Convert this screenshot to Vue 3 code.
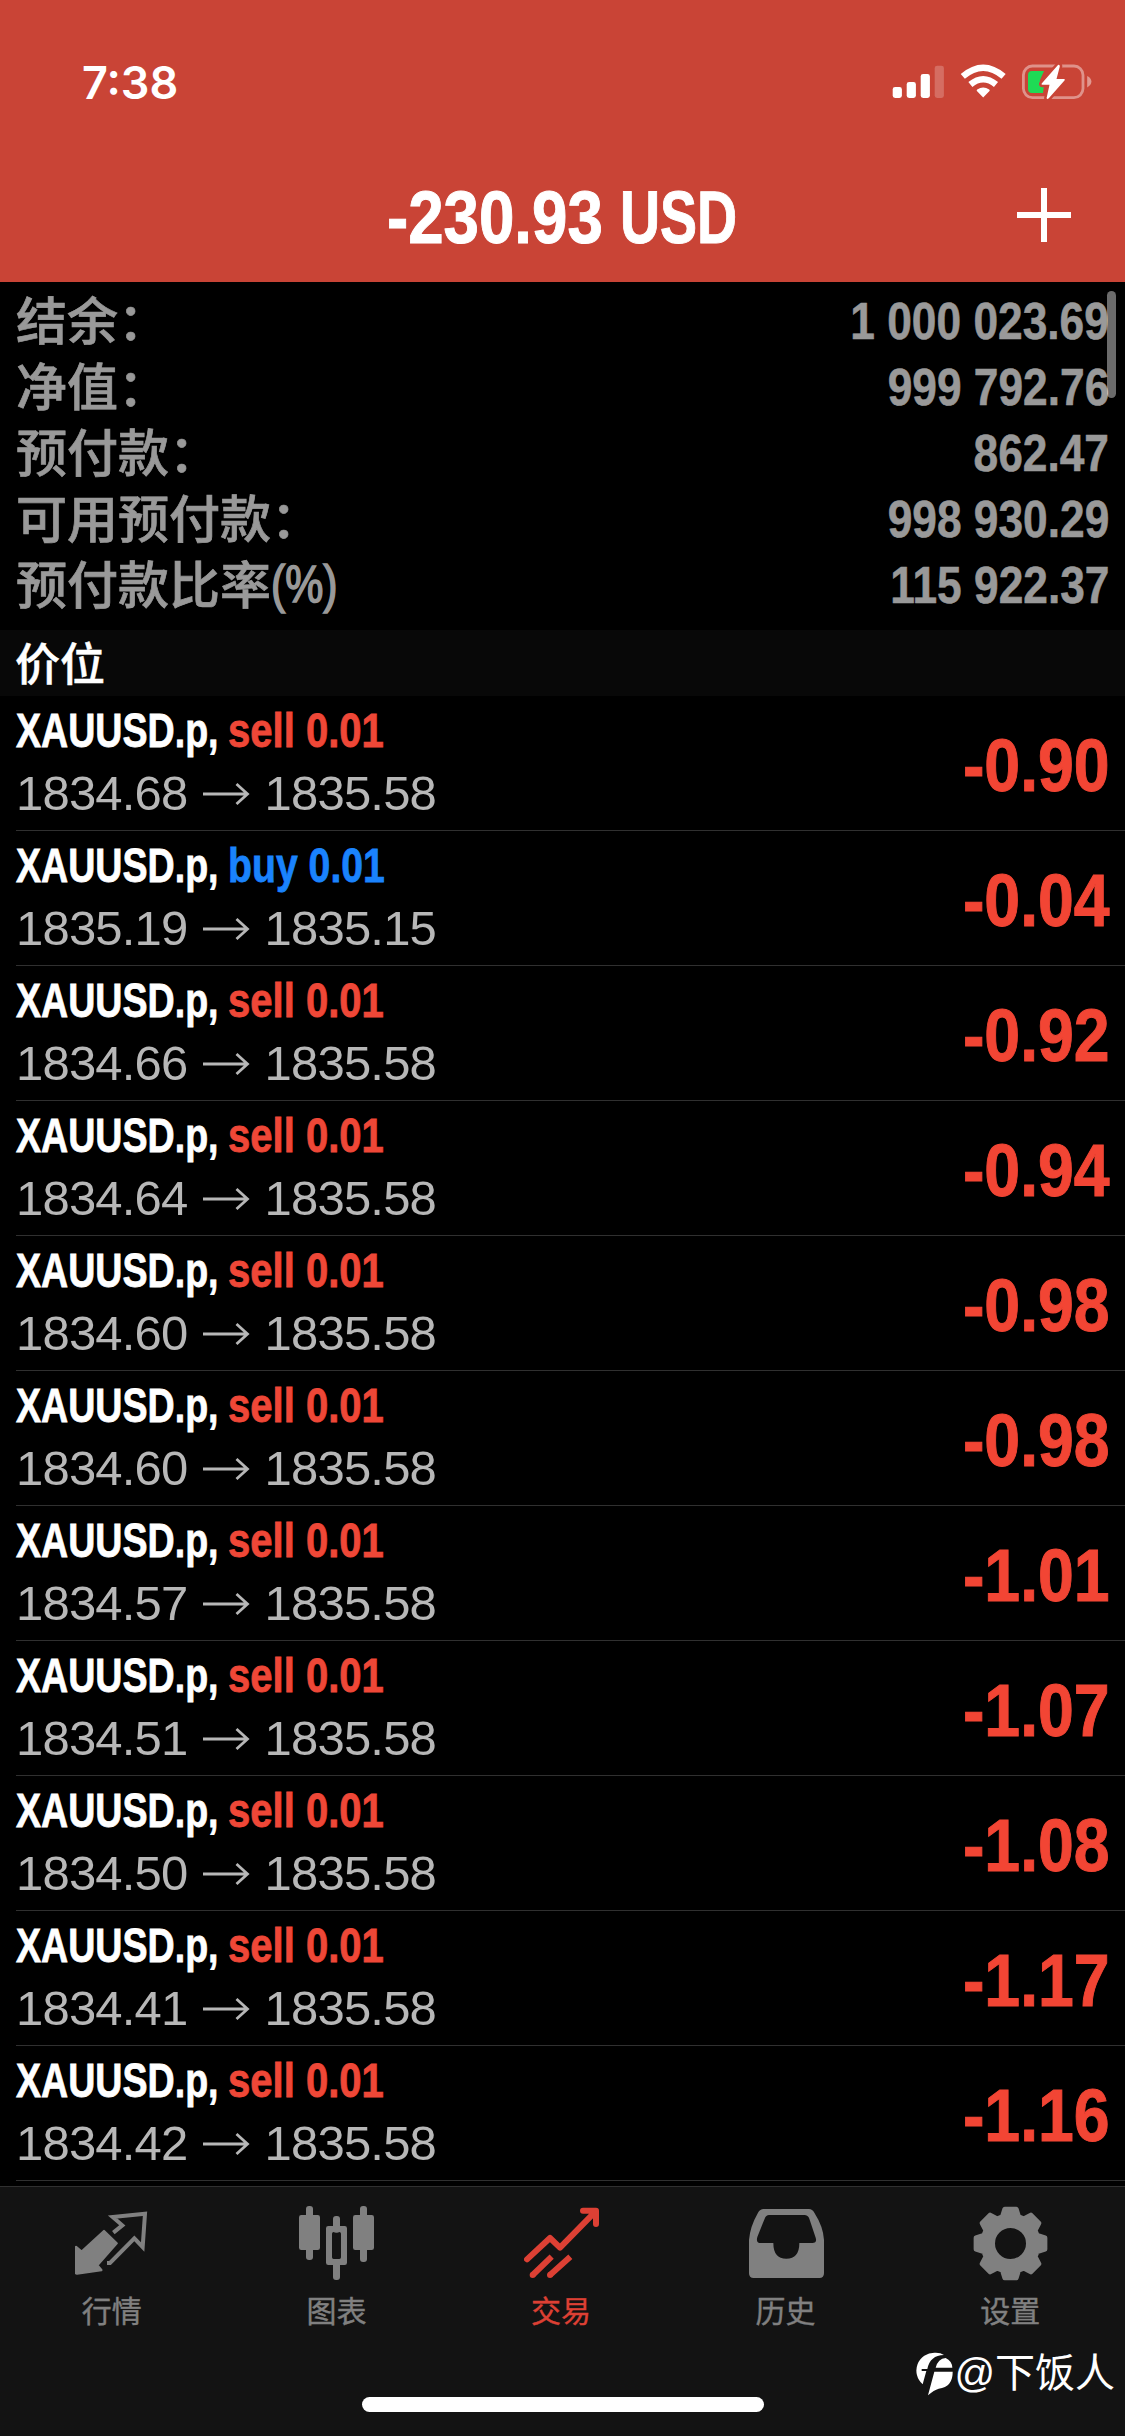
<script setup>
const summary = [
  { label: '结余：', value: '1 000 023.69' },
  { label: '净值：', value: '999 792.76' },
  { label: '预付款：', value: '862.47' },
  { label: '可用预付款：', value: '998 930.29' },
  { label: '预付款比率', unit: '(%)', value: '115 922.37' },
]

const positions = [
  ['sell', '1834.68', '1835.58', '-0.90'],
  ['buy', '1835.19', '1835.15', '-0.04'],
  ['sell', '1834.66', '1835.58', '-0.92'],
  ['sell', '1834.64', '1835.58', '-0.94'],
  ['sell', '1834.60', '1835.58', '-0.98'],
  ['sell', '1834.60', '1835.58', '-0.98'],
  ['sell', '1834.57', '1835.58', '-1.01'],
  ['sell', '1834.51', '1835.58', '-1.07'],
  ['sell', '1834.50', '1835.58', '-1.08'],
  ['sell', '1834.41', '1835.58', '-1.17'],
  ['sell', '1834.42', '1835.58', '-1.16'],
].map(([side, open, current, profit]) => ({ side, open, current, profit }))

const tabs = [
  { id: 'quotes', label: '行情' },
  { id: 'chart', label: '图表' },
  { id: 'trade', label: '交易' },
  { id: 'history', label: '历史' },
  { id: 'settings', label: '设置' },
]

// Eight-toothed gear outline around (112.5, 112.5)
const point = (deg, r) => {
  const t = (deg * Math.PI) / 180
  return `${(112.5 + r * Math.cos(t)).toFixed(1)} ${(112.5 + r * Math.sin(t)).toFixed(1)}`
}
const teeth = Array.from({ length: 8 }, (_, i) =>
  [[-17, 84], [-9.5, 105], [9.5, 105], [17, 84]].map(([a, r]) => point(i * 45 + a, r)).join('L')
).join('L')
const gear = `M${teeth}ZM66 112.5a46.5 46.5 0 1 0 93 0a46.5 46.5 0 1 0 -93 0Z`
const gearOutline = `M${teeth}Z`
</script>

<template>
  <div class="screen">
    <header class="header">
      <div class="status">
        <span class="time">7:38</span>
        <svg class="status-icons" width="200" height="36" viewBox="0 0 200 36">
          <g fill="#fff">
            <rect x="0.7" y="23" width="9.2" height="11" rx="2.4" />
            <rect x="14.7" y="18" width="9.2" height="16" rx="2.4" />
            <rect x="28.7" y="10" width="9.2" height="24" rx="2.4" />
            <rect x="42.7" y="1.7" width="9.2" height="32.3" rx="2.4" opacity=".22" />
            <path d="M91.2 33.6 L84.9 27 Q84.3 26.2 85.2 25.6 Q91.2 21.6 97.2 25.6 Q98.1 26.2 97.5 27 Z" />
          </g>
          <g fill="none" stroke="#fff" stroke-width="6.4">
            <path d="M70.8 12.4 Q91.2 -4.9 111.6 12.4" />
            <path d="M78.4 20.5 Q91.2 10 104 20.5" />
          </g>
          <rect x="131.4" y="2" width="59.6" height="31.6" rx="9" fill="none" stroke="#fff" stroke-opacity=".42" stroke-width="2.8" />
          <path d="M195.2 12 Q199.4 14 199.4 17.6 Q199.4 21.2 195.2 23.4 Z" fill="#fff" opacity=".45" />
          <path d="M140 7 H152 L148 16 Q147 20 152 21 L151 29 H140 Q136 29 136 25 V11 Q136 7 140 7 Z" fill="#1fdb55" />
          <path d="M166 1 L149.7 19.5 Q149 20.8 150.5 20.8 H157.5 L154.6 34 Q155 36 157 34 L172.7 16.2 Q173.3 15 171.8 15 H164.5 L167.8 2.5 Q167.8 0 166 1 Z" fill="#fff" stroke="#c94436" stroke-width="5" paint-order="stroke" />
        </svg>
      </div>
      <div class="titlebar">
        <h1 class="title"><span class="title-num">-230.93</span><span class="title-cur">USD</span></h1>
        <svg class="plus" width="54" height="54" viewBox="0 0 54 54">
          <path d="M27 0V54M0 27H54" stroke="#fff" stroke-width="6" />
        </svg>
      </div>
    </header>

    <section class="summary">
      <div v-for="row in summary" :key="row.label" class="summary-row">
        <span class="summary-label">{{ row.label }}<span v-if="row.unit" class="unit">{{ row.unit }}</span></span>
        <span class="summary-value">{{ row.value }}</span>
      </div>
      <i class="scrollbar"></i>
    </section>

    <h2 class="section-title">价位</h2>

    <main class="list">
      <div class="row" v-for="(p, i) in positions" :key="i">
        <div class="info">
          <div class="deal">
            <span class="symbol">XAUUSD.p,</span><span class="side" :class="p.side">{{ p.side }} 0.01</span>
          </div>
          <div class="prices">
            <span>{{ p.open }}</span>
            <svg class="arrow" width="48" height="24" viewBox="0 0 48 24">
              <path d="M1 12H45M34.5 2L45.5 12L34.5 22" fill="none" stroke="#b7b7b7" stroke-width="2.8" />
            </svg>
            <span>{{ p.current }}</span>
          </div>
        </div>
        <span class="profit">{{ p.profit }}</span>
      </div>
    </main>

    <footer class="footer">
      <nav class="tabs">
        <div v-for="t in tabs" :key="t.id" class="tab" :class="{ active: t.id === 'trade' }">
          <svg width="75" height="75" viewBox="0 0 225 225" fill="currentColor" stroke="currentColor" stroke-width="0">
            <template v-if="t.id === 'quotes'">
              <path d="M3 123L20 137L87 75L125 112L67 178L79 192L6 203Q3 203 3 200Z" stroke-width="7" stroke-linejoin="round" />
              <path d="M115 80L142 58L113 33L210 23L203 123L178 97L105 171H96" fill="none" stroke-width="12" />
            </template>
            <template v-else-if="t.id === 'chart'">
              <rect x="21" y="0" width="21" height="162" rx="9" />
              <rect x="0" y="27" width="63" height="105" rx="7" />
              <rect x="102" y="30" width="21" height="50" rx="9" />
              <rect x="102" y="165" width="21" height="57" rx="9" />
              <path fill-rule="evenodd" d="M88 60H137Q144 60 144 67V170Q144 177 137 177H88Q81 177 81 170V67Q81 60 88 60ZM104 78Q99 78 99 83V154Q99 159 104 159H121Q126 159 126 154V83Q126 78 121 78Z" />
              <rect x="183" y="0" width="21" height="168" rx="9" />
              <rect x="162" y="27" width="63" height="105" rx="7" />
            </template>
            <g v-else-if="t.id === 'trade'" fill="none" stroke-width="18">
              <path d="M9 160L78 96L108 125L214 17M177 14H216V54" stroke-linecap="round" stroke-linejoin="round" />
              <path d="M26 207L83 152M78 207L139 152" />
              <path d="M26 207h.1M78 207h.1" stroke-linecap="round" />
            </g>
            <path v-else-if="t.id === 'history'" fill-rule="evenodd" d="M0 102Q3 62 27 20Q33 9 44 9H180Q190 9 196 20Q223 62 225 102V202Q225 216 211 216H14Q0 216 0 202ZM60 27Q51 27 47 38L25 93Q20 111 35 111H73Q73 158 112 158Q151 158 151 111H190Q205 111 200 95L181 38Q177 27 166 27Z" />
            <template v-else>
              <path :d="gear" fill-rule="evenodd" />
              <path :d="gearOutline" fill="none" stroke-width="14" stroke-linejoin="round" />
            </template>
          </svg>
          <span class="tab-label">{{ t.label }}</span>
        </div>
      </nav>
      <div class="home-indicator"></div>
      <div class="watermark">
        <svg width="38" height="44" viewBox="0 0 114 132">
          <path fill="#fff" d="M56 2A54 54 0 0 0 20 97L31 57H17V51H34Q42 10 84 9Q73 1 56 2Z" />
          <path fill="#fff" d="M59 47Q66 20 89 18Q108 27 109 47ZM55 59H110Q111 104 68 110Q54 114 36 130Z" />
        </svg>
        <span>@下饭人</span>
      </div>
    </footer>
  </div>
</template>

<style>
html,
body {
  background: #000;
}
</style>

<style scoped>
.screen {
  width: 1125px;
  height: 2436px;
  background: #000;
  display: flex;
  flex-direction: column;
  overflow: hidden;
  font-family: "Liberation Sans", "Noto Sans CJK SC", sans-serif;
}
.header {
  height: 282px;
  background: #c94436;
  color: #fff;
  display: flex;
  flex-direction: column;
}
.status {
  display: flex;
  justify-content: space-between;
  align-items: flex-start;
  height: 150px;
  padding: 65px 33px 0 82px;
  box-sizing: border-box;
}
.time {
  font: 600 45px/36px Inter, sans-serif;
}
.status-icons {
  margin-top: -1px;
}
.titlebar {
  display: grid;
  grid-template-columns: 108px 1fr 108px;
  align-items: center;
  height: 132px;
}
.title {
  grid-column: 2;
  margin: 3px 0 0;
  font-size: 74px;
  line-height: 80px;
  display: flex;
  padding-left: 279px;
  white-space: pre;
  -webkit-text-stroke: 1px currentColor;
}
.title-num {
  width: 233px;
  transform: scaleX(0.86);
  transform-origin: left;
}
.title-cur {
  transform: scaleX(0.75);
  transform-origin: left;
}
.plus {
  margin-bottom: 2px;
}
.summary {
  position: relative;
  height: 348px;
  box-sizing: border-box;
  padding: 6px 16px 12px;
  color: #999;
}
.summary-row {
  display: flex;
  justify-content: space-between;
  height: 66px;
  line-height: 68px;
}
.summary-label {
  font-size: 51px;
  font-weight: 500;
  line-height: 70px;
  white-space: nowrap;
  -webkit-text-stroke: 0.7px currentColor;
}
.unit {
  display: inline-block;
  position: relative;
  top: -2px;
  font-size: 51px;
  transform: scaleX(0.84);
  transform-origin: left;
  -webkit-text-stroke: 1.6px currentColor;
}
.summary-value {
  font-size: 51px;
  font-weight: 700;
  transform: scaleX(0.868);
  transform-origin: right;
  -webkit-text-stroke: 0.6px currentColor;
}
.scrollbar {
  position: absolute;
  top: 9px;
  right: 9px;
  width: 9px;
  height: 107px;
  border-radius: 5px;
  background: rgba(255, 255, 255, 0.42);
}
.section-title {
  margin: 0;
  height: 66px;
  padding-left: 15px;
  background: #080808;
  color: #fff;
  font: 500 45px/63px "Noto Sans CJK SC", sans-serif;
  -webkit-text-stroke: 0.5px currentColor;
}
.list {
  height: 1490px;
}
.row {
  height: 135px;
  margin-left: 16px;
  padding-right: 16px;
  box-sizing: border-box;
  border-bottom: 1px solid #303030;
  display: flex;
  justify-content: space-between;
}
.info {
  display: flex;
  flex-direction: column;
  padding-top: 3px;
}
.deal {
  display: flex;
  height: 63px;
  line-height: 63px;
  font-size: 49px;
  font-weight: 700;
  white-space: pre;
  -webkit-text-stroke: 0.8px currentColor;
}
.symbol {
  width: 212px;
  color: #fff;
  transform: scaleX(0.767);
  transform-origin: left;
}
.side {
  transform: scaleX(0.817);
  transform-origin: left;
}
.sell {
  color: #ef4737;
}
.buy {
  color: #1a83fd;
  transform: scaleX(0.8);
}
.prices {
  display: flex;
  align-items: center;
  height: 62px;
  line-height: 62px;
  font-size: 49px;
  letter-spacing: -0.8px;
  color: #b7b7b7;
}
.arrow {
  margin: 2px 15px 0 14px;
}
.profit {
  font-size: 74px;
  font-weight: 700;
  line-height: 139px;
  color: #f24534;
  transform: translateX(1px) scaleX(0.87);
  transform-origin: right;
  -webkit-text-stroke: 1px currentColor;
}
.footer {
  position: relative;
  flex: 1;
  background: #131313;
  border-top: 1px solid #303030;
  display: flex;
  flex-direction: column;
  align-items: center;
}
.tabs {
  width: 1125px;
  height: 210px;
  box-sizing: border-box;
  padding: 19px 2px 0 0;
  display: grid;
  grid-template-columns: repeat(5, 1fr);
}
.tab {
  display: flex;
  flex-direction: column;
  align-items: center;
  color: #808080;
}
.tab.active {
  color: #dd4034;
}
.tab-label {
  margin: 6px 1px 0 0;
  font: 400 30px/44px "Noto Sans CJK SC", sans-serif;
  -webkit-text-stroke: 0.4px currentColor;
}
.home-indicator {
  width: 402px;
  height: 15px;
  border-radius: 8px;
  background: #fff;
}
.watermark {
  position: absolute;
  right: 10px;
  bottom: 33px;
  display: flex;
  align-items: center;
  color: #fff;
  font-size: 40px;
  line-height: 56px;
}
.watermark span {
  margin-bottom: 2px;
}
</style>
